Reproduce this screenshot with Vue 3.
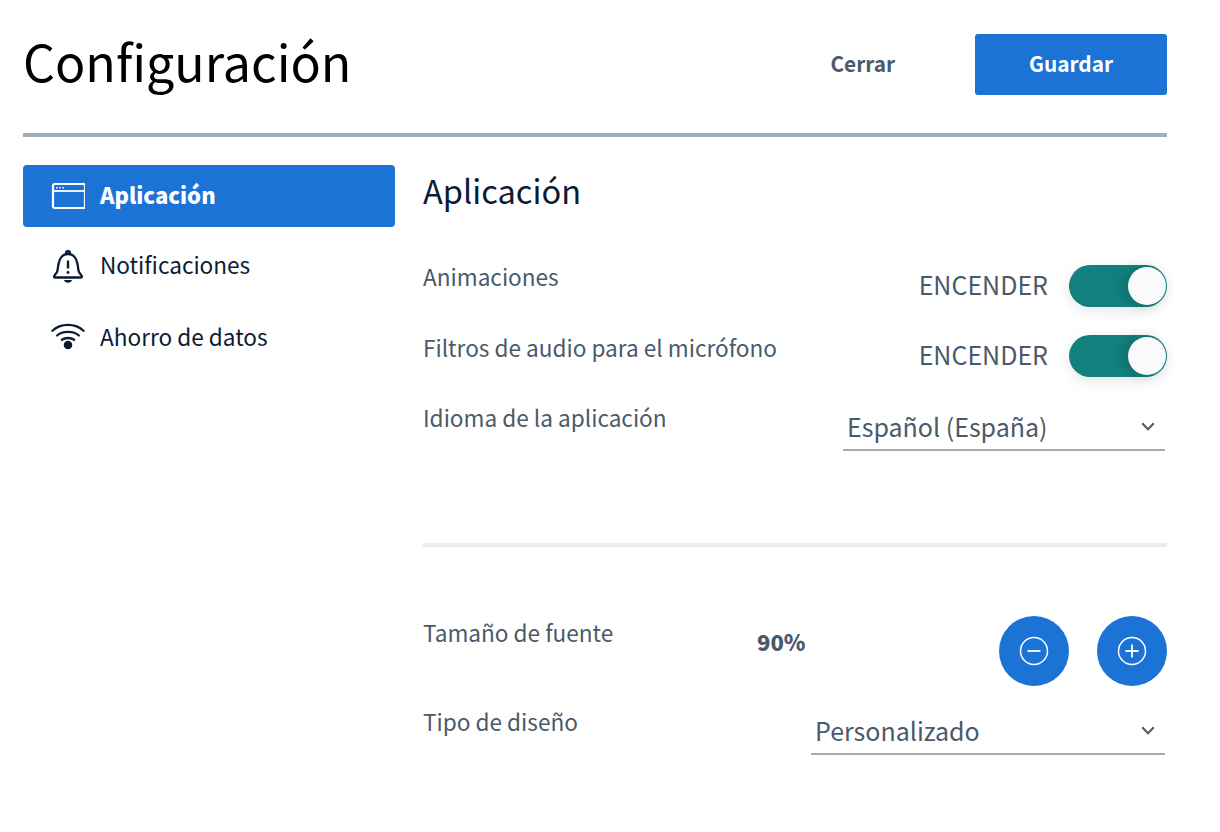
<script setup>
const nav = [
  { label: 'Aplicación', icon: 'app', active: true },
  { label: 'Notificaciones', icon: 'bell' },
  { label: 'Ahorro de datos', icon: 'wifi' },
]
</script>

<template>
  <div class="page">
    <header class="head">
      <h1 class="title">Configuración</h1>
      <div class="actions">
        <button class="close">Cerrar</button>
        <button class="save">Guardar</button>
      </div>
    </header>
    <div class="body">
      <nav class="side">
        <a v-for="n in nav" :key="n.label" class="item" :class="{ active: n.active }">
          <svg v-if="n.icon === 'app'" class="ico" viewBox="0 0 34 36" fill="none" stroke="currentColor" stroke-width="2.200">
            <rect x="2" y="6" width="32" height="24" rx="1.500" />
            <path d="M2 13h32" stroke-width="1.800" />
            <path d="M5 9.700h1.500M8.200 9.700h1.500M11.400 9.700h1.500" stroke-width="1.400" />
          </svg>
          <svg v-else-if="n.icon === 'bell'" class="ico" viewBox="0 0 34 36" fill="none" stroke="currentColor" stroke-width="2.300">
            <path d="M3 27.500c0-1 3-3 3.500-6l1-6.500C8.300 9 12 5 17 5s8.700 4 9.500 10l1 6.500c.5 3 3.500 5 3.500 6 0 .6-.4 1-1 1H4c-.6 0-1-.4-1-1z" stroke-linejoin="round" />
            <path d="M15 4.500c0-3 4-3 4 0" />
            <path d="M17 11.500v8" stroke-width="2.400" />
            <circle cx="17" cy="23.500" r="1.400" fill="currentColor" stroke="none" />
            <path d="M13 31h8c-.8 3.500-7.200 3.500-8 0z" fill="currentColor" stroke="none" />
          </svg>
          <svg v-else class="ico wifi" viewBox="0 0 36 30" fill="none" stroke="currentColor" stroke-width="2.400" stroke-linecap="round">
            <path d="M1.500 9.500C10 1 26 1 34.500 9.500" />
            <path d="M6.500 14.500C12 9.500 24 9.500 29.500 14.500" />
            <path d="M11.500 19C15 16.500 21 16.500 24.500 19" />
            <circle cx="18" cy="24.500" r="4.500" fill="currentColor" stroke="none" />
          </svg>
          <span>{{ n.label }}</span>
        </a>
      </nav>
      <main class="main">
        <h2 class="sub">Aplicación</h2>
        <div class="row r1">
          <span class="label">Animaciones</span>
          <div class="ctl"><span class="state">ENCENDER</span><span class="toggle"><i></i></span></div>
        </div>
        <div class="row r2">
          <span class="label">Filtros de audio para el micrófono</span>
          <div class="ctl"><span class="state">ENCENDER</span><span class="toggle"><i></i></span></div>
        </div>
        <div class="row r3">
          <span class="label">Idioma de la aplicación</span>
          <div class="select lang">
            <span>Español (España)</span>
            <svg class="chev" viewBox="0 0 14 9" fill="none" stroke="currentColor" stroke-width="2"><path d="M1.200 1.200 7 7.200 12.800 1.200" /></svg>
          </div>
        </div>
        <hr class="rule" />
        <div class="row r4">
          <span class="label">Tamaño de fuente</span>
          <b class="pct">90%</b>
          <div class="steps">
            <button class="round" aria-label="menos">
              <svg viewBox="0 0 30 30" fill="none" stroke="#fff"><circle cx="15" cy="15" r="13.500" stroke-width="1.500" /><path d="M8.500 15h13" stroke-width="1.800" /></svg>
            </button>
            <button class="round" aria-label="más">
              <svg viewBox="0 0 30 30" fill="none" stroke="#fff"><circle cx="15" cy="15" r="13.500" stroke-width="1.500" /><path d="M8.500 15h13M15 8.500v13" stroke-width="1.800" /></svg>
            </button>
          </div>
        </div>
        <div class="row r5">
          <span class="label">Tipo de diseño</span>
          <div class="select design">
            <span>Personalizado</span>
            <svg class="chev" viewBox="0 0 14 9" fill="none" stroke="currentColor" stroke-width="2"><path d="M1.200 1.200 7 7.200 12.800 1.200" /></svg>
          </div>
        </div>
      </main>
    </div>
  </div>
</template>

<style>
html, body { background: #fff; }
</style>

<style scoped>
.page {
  width: 1144px;
  margin-left: 23px;
  font-family: "Noto Sans CJK SC", "Noto Sans", sans-serif;
  color: #4a5a6a;
}
.head {
  height: 133px;
  border-bottom: 4px solid #a0aeb9;
  display: flex;
  justify-content: space-between;
  align-items: flex-start;
}
.title {
  margin: 23px 0 0;
  font-size: 50.150px;
  line-height: 74px;
  font-weight: 400;
  color: #000;
}
.actions {
  display: flex;
  align-items: center;
  margin-top: 34px;
}
button { border: 0; font-family: inherit; cursor: pointer; padding: 0; }
.close {
  background: none;
  color: #4a5a6a;
  font-size: 20.800px;
  font-weight: 700;
  line-height: 58px;
  height: 61px;
  padding-bottom: 3px;
  margin-right: 80px;
}
.save {
  width: 192px;
  height: 61px;
  background: #1b73d6;
  color: #fff;
  border-radius: 3px;
  font-size: 20.800px;
  font-weight: 700;
  padding-bottom: 3px;
}
.body { display: flex; padding-top: 28px; }
.side {
  width: 372px;
  flex: none;
  display: flex;
  flex-direction: column;
  gap: 9px;
  color: #0b1b33;
}
.item {
  height: 62px;
  padding-left: 28px;
  display: flex;
  align-items: center;
  gap: 15px;
  font-size: 22.600px;
  border-radius: 4px;
}
.item span { margin-bottom: 4px; }
.item:nth-child(2) span { margin-bottom: 6px; }
.item.active { background: #1b73d6; color: #fff; font-weight: 900; font-size: 22px; }
.ico { width: 34px; height: 36px; flex: none; }
.wifi { margin-top: -4px; }
.main { flex: 1; margin-left: 28px; }
.sub {
  margin: 0;
  font-size: 32.600px;
  line-height: 50px;
  font-weight: 400;
  color: #0b1b33;
}
.row { display: flex; justify-content: space-between; align-items: flex-start; }
.label { font-size: 22.600px; line-height: 36px; margin-top: -5px; }
.r1 .label { margin-top: -6px; }
.r1 { margin-top: 50px; height: 70px; }
.r2 { height: 70px; }
.r3 { height: 138px; }
.ctl { display: flex; align-items: center; gap: 21px; height: 42px; }
.state { font-size: 25px; line-height: 36px; margin-bottom: 4px; }
.toggle {
  position: relative;
  width: 98px;
  height: 42px;
  border-radius: 21px;
  background: #12807e;
  box-shadow: 0 4px 14px rgba(0, 0, 0, .1);
  display: block;
}
.toggle i {
  position: absolute;
  right: 1px;
  top: 2px;
  width: 38px;
  height: 38px;
  border-radius: 50%;
  background: #fafafa;
  box-shadow: -5px 0 12px rgba(0, 0, 0, .16);
}
.select {
  margin-right: 2px;
  display: flex;
  justify-content: space-between;
  align-items: center;
  border-bottom: 2px solid #a0aeb9;
  font-size: 25px;
  line-height: 40px;
  padding: 0 10px 2px 4px;
  box-sizing: border-box;
  height: 46px;
}
.lang { width: 322px; }
.design { width: 354px; margin-top: 4px; }
.chev { width: 14px; height: 9px; }
.rule {
  border: 0;
  height: 4px;
  margin: 0;
  background: #ececec;
}
.r4 { margin-top: 69px; height: 89px; position: relative; }
.r4 .label, .r5 .label { margin-top: -1px; }
.pct {
  position: absolute;
  left: 334px;
  top: 7px;
  font-size: 22px;
  font-weight: 900;
  line-height: 36px;
}
.steps { display: flex; gap: 28px; }
.round {
  width: 70px;
  height: 70px;
  border-radius: 50%;
  background: #1b73d6;
  display: flex;
  align-items: center;
  justify-content: center;
}
.round svg { width: 30px; height: 30px; }
.r5 { height: 60px; }
</style>
